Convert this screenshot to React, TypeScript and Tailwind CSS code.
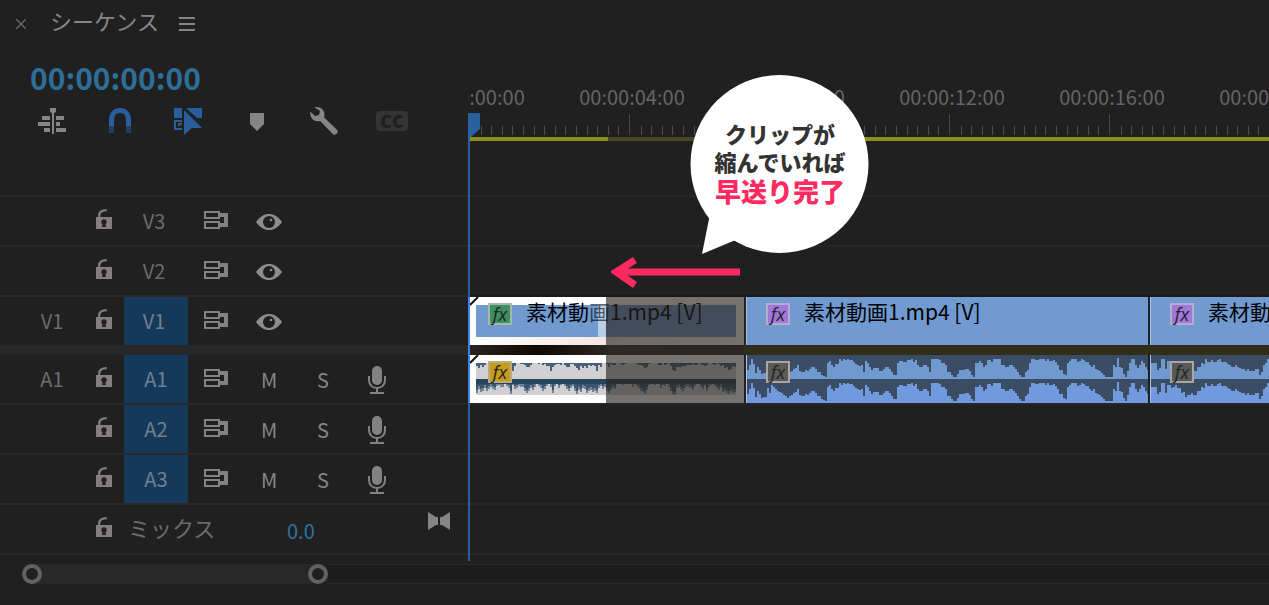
import type { ReactNode } from 'react'

const LABELS = ['00:00:00:00', '00:00:04:00', '00:00:08:00', '00:00:12:00', '00:00:16:00', '00:00:20:00']

const MINOR_TICKS = Array.from({ length: 15 }, (_, i) => i)

// peak heights, one per 2px column
const WAVE_2 = [
  9, 14, 20, 15, 6, 12, 9, 5, 6, 6, 15, 10, 18, 16, 14, 12, 11, 10, 8, 7, 5, 7, 8, 10, 11, 14, 8, 7, 7, 9, 8, 10, 12,
  12, 10, 7, 7, 4, 3, 2, 16, 18, 14, 12, 15, 15, 20, 18, 20, 19, 20, 19, 19, 17, 15, 14, 13, 14, 7, 18, 16, 12, 9, 11,
  11, 11, 8, 8, 10, 12, 12, 10, 7, 4, 4, 16, 18, 18, 17, 17, 19, 19, 20, 17, 19, 14, 12, 12, 14, 14, 12, 7, 20, 20, 20,
  20, 19, 16, 16, 14, 7, 7, 4, 2, 2, 5, 9, 9, 9, 10, 10, 8, 4, 2, 16, 16, 18, 16, 12, 14, 19, 19, 17, 20, 20, 20, 20,
  14, 14, 12, 12, 14, 14, 12, 10, 7, 4, 2, 2, 7, 9, 16, 20, 20, 19, 19, 20, 20, 20, 18, 20, 18, 18, 19, 17, 14, 9, 9,
  5, 4, 16, 18, 20, 20, 20, 17, 18, 20, 19, 17, 17, 14, 12, 14, 10, 9, 8, 6, 4, 2, 2, 2, 2, 14, 12, 21, 12, 11, 5, 2,
  8, 16, 20, 20, 14, 11, 14, 18, 16, 12, 9, 5,
]

const WAVE_3 = [
  16, 16, 16, 9, 11, 20, 20, 10, 18, 18, 15, 16, 18, 15, 15, 10, 11, 6, 8, 8, 10, 8, 8, 12, 12, 16, 15, 20, 17, 17, 19,
  17, 17, 19, 20, 17, 17, 17, 15, 14, 12, 12, 14, 12, 11, 10, 10, 8, 10, 8, 8, 8, 10, 10, 4, 7, 14, 16, 20, 20, 18, 17,
  19, 20, 16, 14, 12, 14, 10, 7, 4, 2, 9, 14, 16, 18,
]

// the shortened clip: dark slivers at the top edge and depth of the middle band
const CUT_TOP = [
  3, 5, 2, 4, 2, 0, 0, 1, 0, 0, 2, 3, 5, 3, 2, 4, 2, 3, 8, 3, 0, 0, 1, 1, 2, 4, 4, 2, 0, 0, 0, 1, 0, 2, 1, 3, 3, 8, 4, 2,
  1, 1, 2, 0, 2, 4, 4, 1, 1, 3, 5, 7, 3, 5, 3, 5, 2, 3, 2, 3, 8, 2, 4, 0, 0, 1, 4, 1, 2, 2, 0, 0, 1, 2, 1, 0, 0, 0, 0, 0,
  1, 2, 2, 3, 5, 4, 1, 0, 0, 0, 0, 2, 2, 0, 2, 1, 0, 3, 7, 8, 4, 4, 4, 3, 3, 2, 2, 2, 1, 2, 2, 0, 1, 2, 3, 2, 0, 0, 1, 2,
  0, 1, 3, 2, 5, 4, 7, 6, 3, 4,
]

const CUT_MID = [
  14, 10, 13, 12, 9, 12, 10, 8, 10, 11, 7, 6, 8, 8, 5, 7, 9, 15, 6, 10, 9, 7, 8, 8, 12, 14, 12, 9, 11, 8, 5, 7, 9, 12, 10,
  7, 4, 8, 14, 7, 5, 9, 6, 4, 7, 10, 12, 9, 7, 12, 15, 11, 13, 9, 10, 14, 12, 11, 13, 12, 14, 9, 7, 10, 8, 12, 14, 11,
  9, 10, 4, 5, 3, 6, 4, 3, 5, 4, 8, 5, 7, 9, 12, 13, 15, 11, 6, 5, 4, 6, 4, 5, 9, 6, 7, 5, 8, 12, 15, 16, 9, 8, 10, 12,
  9, 7, 8, 9, 11, 7, 5, 4, 8, 10, 7, 12, 8, 6, 5, 7, 9, 11, 8, 13, 12, 14, 15, 12, 14, 13,
]

function barsUp(peaks: number[], base: number) {
  return peaks.map((h, i) => `M${i * 2} ${base}v${-h}h2v${h}z`).join('')
}

function barsDown(peaks: number[], top: number) {
  return peaks.map((h, i) => `M${i * 2} ${top}v${h}h2v${-h}z`).join('')
}

function LockIcon() {
  return (
    <svg width="16" height="20" viewBox="0 0 16 20" className="text-[#827f7e]">
      <path d="M3.200 9V6.500C3.200 3 5.500 1.100 10.800 1.100" fill="none" stroke="currentColor" strokeWidth="2.200" />
      <path
        d="M0 8h16v12H0zM8 10.2a2.700 2.700 0 0 0-1.500 5L6 18h4l-.5-2.800A2.700 2.700 0 0 0 8 10.200z"
        fill="currentColor"
        fillRule="evenodd"
      />
    </svg>
  )
}

function SyncIcon() {
  return (
    <svg width="24" height="18" viewBox="0 0 24 18" className="text-[#828282]">
      <path d="M1 1h14v6H1zM1 11h14v6H1z" fill="none" stroke="currentColor" strokeWidth="2" />
      <path d="M16 2h8v14h-8v-4h4V6h-4z" fill="currentColor" />
    </svg>
  )
}

function EyeIcon() {
  return (
    <svg width="26" height="18" viewBox="0 0 26 18" className="text-[#8c8c8c]">
      <path d="M0 9C4 3.500 8 1 13 1s9 2.500 13 8c-4 5.500-8 8-13 8S4 14.500 0 9z" fill="currentColor" />
      <circle cx="13" cy="9" r="6" fill="#1f1f1f" />
      <circle cx="15" cy="7" r="1.300" fill="currentColor" />
    </svg>
  )
}

function MicIcon() {
  return (
    <svg width="18" height="28" viewBox="0 0 18 28" className="text-[#828282]">
      <rect x="4" y="0" width="10" height="19" rx="5" fill="currentColor" />
      <path d="M1 10v4c0 5 3.500 8 8 8s8-3 8-8v-4M9 22v4M2 27h14" fill="none" stroke="currentColor" strokeWidth="2" />
    </svg>
  )
}

function IconButton({ label, className = '', children }: { label: string; className?: string; children: ReactNode }) {
  return (
    <button type="button" aria-label={label} className={`flex shrink-0 items-center justify-center ${className}`}>
      {children}
    </button>
  )
}

interface TrackHeadProps {
  name: string
  source?: string
  targeted?: boolean
  audio?: boolean
}

function TrackHead({ name, source, targeted, audio }: TrackHeadProps) {
  return (
    <div className={`flex h-[50px] border-[#282828] text-xl text-[#6c6c6c] ${audio ? 'border-b-2' : 'border-t-2'}`}>
      <div className="flex w-[84px] items-center justify-center pl-5">{source}</div>
      <IconButton label={`${name} lock`} className="w-10 pb-1">
        <LockIcon />
      </IconButton>
      <button
        type="button"
        className={`w-16 shrink-0 ${audio ? '' : 'pr-1'} ${targeted ? 'bg-[#14395a] text-[#6d8191]' : ''}`}
      >
        {name}
      </button>
      <IconButton label={`${name} sync lock`} className="w-14 pb-0.5">
        <SyncIcon />
      </IconButton>
      {audio ? (
        <>
          <button type="button" aria-label={`${name} mute`} className="w-[50px] pt-0.5 text-[#868686]">
            M
          </button>
          <button type="button" aria-label={`${name} solo`} className="w-[58px] pt-0.5 text-[#868686]">
            S
          </button>
          <IconButton label={`${name} record`} className="w-[50px] pt-0.5">
            <MicIcon />
          </IconButton>
        </>
      ) : (
        <IconButton label={`${name} visibility`} className="w-[50px] pt-0.5">
          <EyeIcon />
        </IconButton>
      )}
    </div>
  )
}

function Fx({ className }: { className: string }) {
  return (
    <span
      className={`flex h-[22px] w-6 shrink-0 items-center justify-center border-2 font-['Open_Sans','Noto_Sans',sans-serif] text-lg leading-none text-[#20241f] italic ${className}`}
    >
      fx
    </span>
  )
}

function VideoClip({ className }: { className: string }) {
  return (
    <div
      className={`flex items-start gap-3.5 overflow-hidden border-l border-[#a5c4ee] bg-[#719ad0] pl-[19px] whitespace-nowrap ${className}`}
    >
      <Fx className="mt-1.5 border-[#b5adc9] bg-[#a376de]" />
      <span className="text-[21px] leading-7 text-black">素材動画1.mp4 [V]</span>
    </div>
  )
}

function AudioClip({ peaks, className }: { peaks: number[]; className: string }) {
  return (
    <div className={`relative overflow-hidden border-l border-[#a5c4ee] bg-[#3a4d65] pt-1.5 pl-[19px] ${className}`}>
      <svg className="absolute inset-0" width="404" height="48">
        <path d={barsUp(peaks, 24)} fill="#7099cf" />
        <path d={barsUp(peaks, 48)} fill="#7099de" />
      </svg>
      <Fx className="relative border-[#aba5a5] bg-[#5a5a58]" />
    </div>
  )
}

function CutCorner() {
  return (
    <svg className="absolute top-0 left-0.5" width="10" height="10">
      <path d="M0 8L8 0" stroke="#111" strokeWidth="2" />
    </svg>
  )
}

function CutVideoClip() {
  return (
    <div className="relative w-[276px] shrink-0 overflow-hidden bg-white p-2">
      <div className="h-full bg-[#719ad0]" />
      <div className="absolute inset-x-0 bottom-0 h-2 bg-linear-to-r from-white via-[#f6e6e2] to-white" />
      <div className="absolute top-2 bottom-2 left-[130px] w-2 bg-white/50" />
      <div className="absolute inset-0 flex items-start gap-3.5 pl-5 whitespace-nowrap">
        <Fx className="mt-1.5 border-[#a9b8ae] bg-[#3d9060]" />
        <span className="text-[21px] leading-7 text-black">
          素材動<span className="text-black/60">画</span>1.mp4 [V]
        </span>
      </div>
      <div className="absolute inset-y-0 right-0 left-[138px] bg-[#27211b]/64" />
      <CutCorner />
    </div>
  )
}

function CutAudioClip() {
  return (
    <div className="relative w-[276px] shrink-0 overflow-hidden bg-white p-2">
      <svg className="h-8 w-[260px] bg-[#d0d0d2]" width="260" height="32">
        <path d={barsDown(CUT_TOP, 0)} fill="#4b6077" />
        <path d={barsDown(CUT_MID, 16)} fill="#71849a" />
        <path d={barsDown(CUT_MID.map((h) => Math.max(h - 3, 0)), 16)} fill="#3a556d" />
        <path d="M0 16h260v5H0z" fill="#26465f" />
      </svg>
      <div className="absolute top-1.5 left-5">
        <Fx className="border-[#b9ad80] bg-[#c79a20]" />
      </div>
      <div className="absolute inset-y-0 right-0 left-[138px] bg-[#27241f]/64" />
      <CutCorner />
    </div>
  )
}

function Tools() {
  return (
    <div className="flex h-10 pl-[18px]">
      <IconButton label="Insert as nest" className="w-17">
        <svg width="28" height="26" viewBox="0 0 28 26" fill="#858585">
          <path d="M12 0h6v4l-2 1v21h-2V5l-2-1zM4 8h8v4H4zM18 8h8v4h-8zM0 14h12v4H0zM18 14h4v4h-4zM6 20h6v4H6zM18 20h10v4H18z" />
        </svg>
      </IconButton>
      <IconButton label="Snap" className="w-17">
        <svg width="22" height="26" viewBox="0 0 22 26">
          <path d="M2.500 18v-6C2.500 6 6 2.500 11 2.500S19.500 6 19.500 12v6" fill="none" stroke="#275e9b" strokeWidth="5" />
          <path d="M0 18h5v7H0zM17 18h5v7h-5z" fill="#1f3f66" />
        </svg>
      </IconButton>
      <IconButton label="Linked selection" className="w-17">
        <svg width="28" height="27" viewBox="0 0 28 27">
          <path d="M0 0h8v10H0zM12 0h16v10h-5z" fill="#275e9b" />
          <path d="M8 13H1v8h7M8 16H5v2" fill="none" stroke="#275e9b" strokeWidth="2" />
          <path d="M10 2v25l8-7h10z" fill="#275e9b" />
        </svg>
      </IconButton>
      <IconButton label="Add marker" className="w-17 pt-0.5 pl-0.5">
        <svg width="14" height="18" viewBox="0 0 14 18" fill="#858585">
          <path d="M0 0h14v11l-7 7-7-7z" />
        </svg>
      </IconButton>
      <IconButton label="Timeline settings" className="w-17">
        <svg width="28" height="28" viewBox="0 0 28 28">
          <path
            d="M4.500 0.300C9.500-.8 14.500 2.500 14.500 7.500c0 1-.2 1.900-.5 2.700L27.200 23c1.800 2.600-1.400 5.800-4.200 4.200L10.200 14C5.500 15.500.3 12 .2 6.200c0-.7.1-1 .3-1.400L5 9l4-1 1-4z"
            fill="#858585"
          />
        </svg>
      </IconButton>
      <IconButton label="Captions" className="w-17">
        <span className="flex h-5 w-8 items-center justify-center rounded-sm bg-[#343434] font-['Open_Sans',sans-serif] text-lg leading-none font-extrabold text-[#1f1f1f]">
          CC
        </span>
      </IconButton>
    </div>
  )
}

function Ruler() {
  return (
    <div className="h-[151px] overflow-hidden pt-[39px]">
      <div className="-ml-[76px] flex text-xl leading-7 text-[#656565]">
        {LABELS.map((label) => (
          <span key={label} className="w-40 shrink-0 text-center">
            {label}
          </span>
        ))}
      </div>
      <div className="mt-[3px] ml-px flex h-[21px]">
        {LABELS.map((label) => (
          <div key={label} className="grid w-40 shrink-0 grid-cols-15 items-end border-l border-[#484848]">
            {MINOR_TICKS.map((i) => (
              <i key={i} className={`h-[9px] ${i === 0 ? '' : 'border-l border-[#4e4e4e]'}`} />
            ))}
          </div>
        ))}
      </div>
      <div className="mt-0.5 ml-0.5 flex h-1">
        <div className="w-[138px] bg-[#8f8f1f]" />
        <div className="w-[138px] bg-[#4b481d]" />
        <div className="flex-1 bg-[#8f8f1f]" />
      </div>
    </div>
  )
}

function Callout() {
  return (
    <div className="absolute top-[74px] left-[690px] w-[180px]">
      <svg width="180" height="182" viewBox="0 0 180 182" fill="#fff">
        <circle cx="89.500" cy="90" r="89" />
        <path d="M20 140L12 180l36-15z" />
      </svg>
      <p className="absolute inset-x-0 top-[45px] text-center text-[22px] leading-7 font-black whitespace-nowrap text-[#333]">
        <span className="block">クリップが</span>
        <span className="block">縮んでいれば</span>
        <span className="block text-[26px] leading-8 text-[#ff2a62]">早送り完了</span>
      </p>
    </div>
  )
}

export default function App() {
  return (
    <div className="relative min-h-screen overflow-hidden bg-[#202020] font-['Noto_Sans_CJK_JP','Noto_Sans',sans-serif]">
      <header className="flex h-11 items-center pt-1 pl-4">
        <IconButton label="閉じる" className="w-2.5">
          <svg width="10" height="10" viewBox="0 0 10 10" stroke="#666" strokeWidth="1.500">
            <path d="M0 0l10 10M10 0L0 10" />
          </svg>
        </IconButton>
        <h1 className="pb-2 pl-6 text-[22px] leading-8 text-[#868686]">シーケンス</h1>
        <IconButton label="メニュー" className="ml-5 w-4">
          <svg width="16" height="14" viewBox="0 0 16 14" fill="#868686">
            <path d="M0 0h16v2H0zM0 6h16v2H0zM0 12h16v2H0z" />
          </svg>
        </IconButton>
      </header>

      <div className="flex">
        <section className="w-[468px] shrink-0">
          <div className="h-[151px] pt-[13px]">
            <p className="pl-[30px] text-[30px] leading-10 font-bold text-[#2d6f98]">00:00:00:00</p>
            <div className="pt-1">
              <Tools />
            </div>
          </div>
          <TrackHead name="V3" />
          <TrackHead name="V2" />
          <TrackHead name="V1" source="V1" targeted />
          <div className="h-2.5 bg-[#272727]" />
          <TrackHead name="A1" source="A1" targeted audio />
          <TrackHead name="A2" targeted audio />
          <TrackHead name="A3" targeted audio />
          <div className="flex h-[50px] items-center border-b-2 border-[#282828] pl-[84px]">
            <IconButton label="ミックス lock" className="w-10 pb-1">
              <LockIcon />
            </IconButton>
            <span className="w-[163px] pb-1 pl-1 text-[22px] text-[#6c6c6c]">ミックス</span>
            <span className="pt-1 text-xl text-[#2d73a0]">0.0</span>
            <IconButton label="キーフレーム" className="mr-[18px] ml-auto pb-4">
              <svg width="22" height="18" viewBox="0 0 22 18" fill="#858585">
                <path d="M0 0l8 5h2v8H8l-8 5zM22 0l-8 5h-2v8h2l8 5z" />
              </svg>
            </IconButton>
          </div>
        </section>

        <section className="relative min-w-0 flex-1">
          <Ruler />
          <div className="h-[50px] border-t-2 border-[#262626]" />
          <div className="h-[50px] border-t-2 border-[#262626]" />
          <div className="flex h-[50px] gap-0.5 border-t-2 border-[#1a1a18]">
            <CutVideoClip />
            <VideoClip className="w-[402px] shrink-0" />
            <VideoClip className="min-w-0 flex-1" />
          </div>
          <div className="flex h-2.5">
            <div className="w-[138px] bg-linear-to-r from-[#2a2522] via-[#100803] to-[#2a2622]" />
            <div className="w-[138px] bg-[#2b2825]" />
            <div className="flex-1 bg-[#302d18]" />
          </div>
          <div className="flex h-12 gap-0.5">
            <CutAudioClip />
            <AudioClip peaks={WAVE_2} className="w-[402px] shrink-0" />
            <AudioClip peaks={WAVE_3} className="min-w-0 flex-1" />
          </div>
          <div className="h-[50px] border-t-2 border-[#262626]" />
          <div className="h-[50px] border-t-2 border-[#262626]" />
          <div className="h-[52px] border-y-2 border-[#262626]" />

          <div className="absolute top-[93px] left-0 h-[424px] w-0.5 bg-[#27609c]" />
          <div className="absolute top-[253px] left-0 h-[106px] w-0.5 bg-[#3c83ea]" />
          <svg className="absolute top-[69px] left-0" width="12" height="24" fill="#27609c">
            <path d="M0 0h12v16l-9 8H0z" />
          </svg>
        </section>
      </div>

      <div className="mt-[9px] flex h-5 items-center pl-[22px]">
        <div className="flex h-full w-[306px] justify-between rounded-full bg-[#282828]">
          <button type="button" aria-label="Zoom start" className="size-5 rounded-full border-4 border-[#626262] bg-[#202020]" />
          <button type="button" aria-label="Zoom end" className="size-5 rounded-full border-4 border-[#626262] bg-[#202020]" />
        </div>
        <div className="h-full flex-1 border-y border-[#282828] bg-[#1c1c1c]" />
      </div>

      <svg className="absolute top-[256px] left-[611px]" width="130" height="34" fill="none" stroke="#ff2a5f" strokeWidth="7">
        <path d="M129 16H8" />
        <path d="M24 4L5 16l19 13" />
      </svg>
      <Callout />
    </div>
  )
}
